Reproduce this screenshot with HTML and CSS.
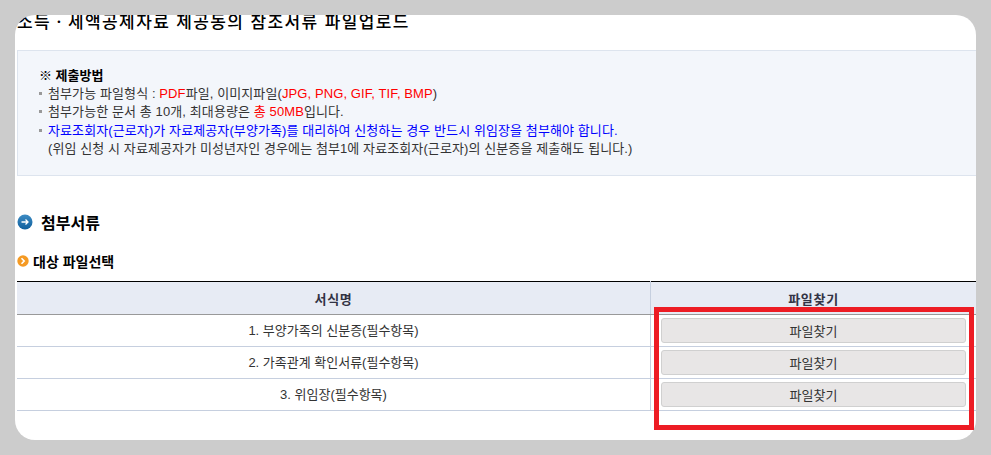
FILE: index.html
```html
<!DOCTYPE html>
<html lang="ko">
<head>
    <meta charset="UTF-8">
    <title>참조서류 파일업로드</title>
    <link rel="stylesheet" href="styles.css">
</head>
<body>
<div class="panel">
    <h1 class="title">소득ㆍ세액공제자료 제공동의 참조서류 파일업로드</h1>

    <div class="notice">
        <p class="notice-head">※ 제출방법</p>
        <ul class="notice-list">
            <li>첨부가능 파일형식 : <span class="red">PDF</span>파일, 이미지파일(<span class="red">JPG, PNG, GIF, TIF, BMP</span>)</li>
            <li>첨부가능한 문서 총 10개, 최대용량은 <span class="red">총 50MB</span>입니다.</li>
            <li><span class="blue">자료조회자(근로자)가 자료제공자(부양가족)를 대리하여 신청하는 경우 반드시 위임장을 첨부해야 합니다.</span></li>
            <li class="plain">(위임 신청 시 자료제공자가 미성년자인 경우에는 첨부1에 자료조회자(근로자)의 신분증을 제출해도 됩니다.)</li>
        </ul>
    </div>

    <h2 class="section-title">
        <svg class="icon-blue" width="16" height="16" viewBox="0 0 16 16">
            <defs>
                <linearGradient id="blueball" x1="0" y1="0" x2="0" y2="1">
                    <stop offset="0" stop-color="#3d8cc4"/>
                    <stop offset="1" stop-color="#0f5f9c"/>
                </linearGradient>
            </defs>
            <circle cx="8" cy="8" r="7.5" fill="url(#blueball)"/>
            <path d="M4.5 8H11M8.5 5.5L11 8L8.5 10.5" fill="none" stroke="#fff" stroke-width="1.3"/>
        </svg>
        첨부서류
    </h2>

    <h3 class="sub-title">
        <svg class="icon-orange" width="12" height="12" viewBox="0 0 12 12">
            <circle cx="6" cy="6" r="5.7" fill="#f59a23"/>
            <path d="M4.5 3.2L7.2 6L4.5 8.8" fill="none" stroke="#fff" stroke-width="1.6"/>
        </svg>
        대상 파일선택
    </h3>

    <table class="file-table">
        <tr>
            <th>서식명</th>
            <th class="col-file">파일찾기</th>
        </tr>
        <tr>
            <td>1. 부양가족의 신분증(필수항목)</td>
            <td class="col-file"><button class="file-btn">파일찾기</button></td>
        </tr>
        <tr>
            <td>2. 가족관계 확인서류(필수항목)</td>
            <td class="col-file"><button class="file-btn">파일찾기</button></td>
        </tr>
        <tr>
            <td>3. 위임장(필수항목)</td>
            <td class="col-file"><button class="file-btn">파일찾기</button></td>
        </tr>
    </table>
</div>
<div class="highlight"></div>
</body>
</html>
```

FILE: styles.css
```css
html, body {
    margin: 0;
    height: 455px;
    overflow: hidden;
}

body {
    position: relative;
    background-color: #cccccc;
    font-family: "Liberation Sans", "Noto Sans CJK KR", sans-serif;
    font-size: 13px;
    color: #333333;
}

.panel {
    box-sizing: border-box;
    width: 961px;
    height: 425px;
    margin: 15px 0 0 15px;
    padding-left: 2px;
    background-color: #ffffff;
    border-radius: 20px;
    overflow: hidden;
}

.title {
    margin: -3px 0 0 0;
    height: 38px;
    font-size: 17px;
    line-height: 22px;
    font-weight: 500;
    color: #000000;
    letter-spacing: 1.38px;
}

.notice {
    box-sizing: border-box;
    height: 126px;
    padding: 16px 0 0 21px;
    background-color: #f3f6fb;
    border: 1px solid #dde4ee;
    border-right: none;
}

.notice-head {
    margin: 0;
    font-size: 13px;
    line-height: 18px;
    font-weight: 700;
    color: #000000;
}

.notice-list {
    margin: 0;
    padding: 0;
    list-style: none;
}

.notice-list li {
    position: relative;
    padding-left: 9px;
    line-height: 18.3px;
    letter-spacing: 0.1px;
}

.notice-list li::before {
    content: "";
    position: absolute;
    left: 0;
    top: 7px;
    width: 3px;
    height: 3px;
    background-color: #999999;
}

.notice-list li.plain::before {
    display: none;
}

.red {
    color: #ff0000;
}

.blue {
    color: #0000ff;
}

.section-title {
    display: flex;
    align-items: center;
    gap: 8px;
    margin: 35px 0 0 0;
    height: 22px;
    font-size: 16px;
    font-weight: 700;
    color: #000000;
}

.sub-title {
    display: flex;
    align-items: center;
    gap: 4px;
    margin: 18px 0 0 0;
    height: 20px;
    font-size: 14px;
    font-weight: 700;
    color: #000000;
}

.file-table {
    width: 959px;
    height: 130px;
    margin-top: 10px;
    border-collapse: collapse;
    table-layout: fixed;
    border-top: 1px solid #000000;
}

.file-table th {
    height: 32px;
    padding: 0;
    background-color: #e7ebf4;
    border-bottom: 1px solid #999999;
    font-size: 13px;
    letter-spacing: 0.7px;
    font-weight: 700;
    color: #333344;
    text-align: center;
}

.file-table td {
    height: 28px;
    padding: 0 0 3px 0;
    border-bottom: 1px solid #c6cfdf;
    text-align: center;
}

.file-table td.col-file {
    height: 31px;
    padding: 0;
}

.col-file {
    width: 325px;
    border-left: 1px solid #c6cfdf;
}

.file-btn {
    display: block;
    box-sizing: border-box;
    width: 305px;
    height: 25px;
    margin: 0 auto 0 10px;
    padding: 0;
    background-color: #e8e6e6;
    border: 1px solid #d0d0d0;
    border-radius: 3px;
    font-family: inherit;
    font-size: 13px;
    color: #333333;
}

.highlight {
    position: absolute;
    left: 654px;
    top: 307px;
    box-sizing: border-box;
    width: 320px;
    height: 123px;
    border: 5px solid #ed1c24;
}
```
